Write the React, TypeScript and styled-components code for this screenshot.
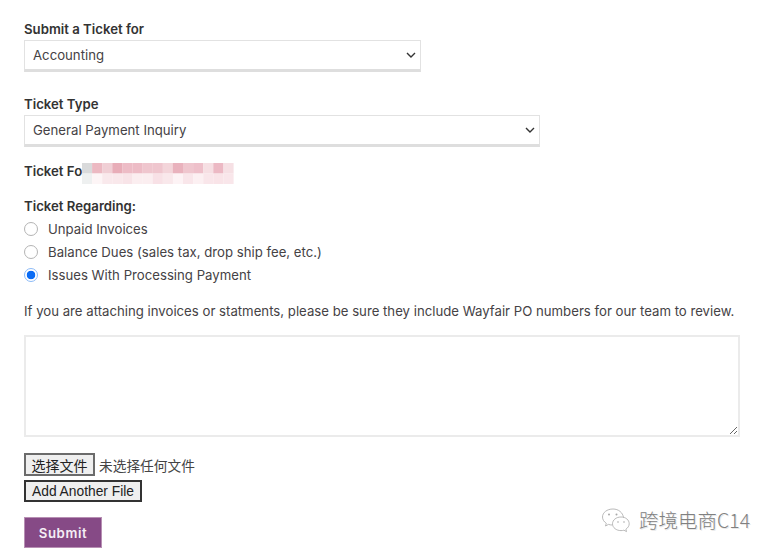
import React from "react";
import styled, {createGlobalStyle} from "styled-components";

const GlobalStyle = createGlobalStyle`
	html, body {
		margin: 0;
		padding: 0;
		background: #fff;
	}
`;

const chevron = encodeURIComponent(
	`<svg xmlns="http://www.w3.org/2000/svg" width="10" height="6" viewBox="0 0 10 6"><path d="M1 1l4 4 4-4" fill="none" stroke="#333" stroke-width="1.4"/></svg>`
);

const Page = styled.form`
	box-sizing: border-box;
	position: relative;
	width: 774px;
	height: 553px;
	padding: 21px 34px 0 24px;
	overflow: hidden;
	font-family: "Inter", "Noto Sans CJK SC", sans-serif;
	font-size: 13.2px;
	color: #454245;
`;

const FieldLabel = styled.label`
	display: block;
	height: 19px;
	line-height: 17px;
	font-weight: 600;
	font-size: 13.2px;
	color: #333;
`;

const Select = styled.select<{$width: number; $gap: number}>`
	display: block;
	box-sizing: border-box;
	appearance: none;
	width: ${p => p.$width}px;
	height: 32px;
	margin-bottom: ${p => p.$gap}px;
	padding: 0 8px 1px 8px;
	border: 1px solid #e2e2e2;
	border-bottom: 3px solid #dedede;
	border-radius: 0;
	background: #fff url("data:image/svg+xml,${chevron}") no-repeat right 4px center;
	font: inherit;
	color: #454245;
`;

const TicketFor = styled.div`
	display: flex;
	align-items: center;
	height: 20px;
	margin-bottom: 15px;
	font-weight: 600;
	font-size: 13.2px;
	color: #333;
`;

const Mosaic = styled.svg`
	display: block;
	margin: 4px 0 0 0;
`;

const RadioGroup = styled.fieldset`
	margin: 0 0 16px;
	padding: 0;
	border: 0;
`;

const GroupTitle = styled.div`
	height: 21px;
	line-height: 20px;
	font-weight: 600;
	font-size: 13.2px;
	color: #333;
`;

const RadioRow = styled.label`
	display: flex;
	align-items: center;
	gap: 10px;
	height: 23px;
`;

const Radio = styled.input`
	appearance: none;
	box-sizing: border-box;
	flex: none;
	width: 14px;
	height: 14px;
	margin: 0;
	border: 1px solid #b4b4b4;
	border-radius: 50%;
	background: #fff;

	&:checked {
		border-color: #8dbbf7;
		background: radial-gradient(circle, #0a6cf5 0 4px, #fff 4.6px);
	}
`;

const Notice = styled.p`
	margin: 0 0 14px;
	line-height: 19px;
	white-space: nowrap;
`;

const Message = styled.textarea`
	display: block;
	box-sizing: border-box;
	width: 716px;
	height: 102px;
	margin-bottom: 16px;
	border: 2px solid #ebebeb;
	border-radius: 0;
	outline: none;
	background: #fff;
`;

const FileRow = styled.div`
	display: flex;
	align-items: center;
	gap: 4px;
	height: 23px;
	margin-bottom: 4px;
	font-family: "Liberation Sans", "Noto Sans CJK SC", sans-serif;
	font-size: 13.7px;
	color: #444;
`;

const NativeButton = styled.button<{$dark?: boolean}>`
	display: block;
	box-sizing: border-box;
	height: ${p => (p.$dark ? 22 : 23)}px;
	padding: 0 ${p => (p.$dark ? 6 : 5.5)}px;
	border: 2px solid ${p => (p.$dark ? "#333" : "#6b6b6b")};
	border-radius: 0;
	background: #efefef;
	font-family: "Liberation Sans", "Noto Sans CJK SC", sans-serif;
	font-size: ${p => (p.$dark ? 13.8 : 14)}px;
	color: #222;
`;

const SubmitButton = styled.button`
	display: block;
	box-sizing: border-box;
	width: 78px;
	height: 31px;
	margin-top: 15px;
	padding: 0;
	border: 1px solid #b78fb3;
	background: #864a86;
	font-family: "Inter", sans-serif;
	font-size: 13.2px;
	font-weight: 600;
	letter-spacing: 0.6px;
	color: #f5eef5;
`;

const Watermark = styled.div`
	position: absolute;
	left: 601px;
	top: 505px;
	display: flex;
	align-items: center;
	gap: 8px;
	font-family: "Noto Sans CJK SC", sans-serif;
	font-size: 19.5px;
	font-weight: 300;
	color: #808080;
	text-shadow: 1px 1px 0 #e8e8e8;
`;

const mosaicRows = [
	["#d9dadb", "#ecb9c2", "#f0cfd5", "#e8adb8", "#edbcc6", "#edbcc6", "#efc6ce", "#efc6ce", "#f3d5da", "#e9b2bd", "#efc6ce", "#eec0ca", "#f6dfe3", "#ecb9c4", "#f6e0e4"],
	["#eef0f0", "#fdf5f6", "#f9e9ec", "#f9e8eb", "#f8e4e8", "#fbeef0", "#fbeef0", "#f8e1e6", "#f9e8eb", "#fdf3f5", "#f9e6ea", "#fcf0f2", "#f9e6ea", "#f9e4e8", "#f9e6ea"],
];

function RedactedName () {
	return (
		<Mosaic width="152" height="21" viewBox="0 0 152 21" aria-hidden="true">
			{mosaicRows.map((row, y) => row.map((fill, x) => (
				<rect key={`${x}-${y}`} x={x * 10.1} y={y * 10.5} width="10.2" height="10.6" fill={fill} />
			)))}
		</Mosaic>
	);
}

function WeChatIcon () {
	return (
		<svg width="30" height="26" viewBox="0 0 30 26" fill="none" stroke="#a8a8a8" strokeWidth="0.8" aria-hidden="true">
			<path d="M12 2C6 2 1.5 5.600 1.500 10c0 2.600 1.500 4.800 3.800 6.300L4.500 19l3-1.600c1.200.4 2.400.6 3.700.6" />
			<path d="M22.500 10.500C21.800 5.600 17.500 2 12 2" />
			<path d="M20 10c-4.800 0-8.500 3-8.500 6.800s3.700 6.800 8.500 6.800c1 0 2-.1 2.900-.4l2.600 1.400-.6-2.400c2-1.300 3.300-3.300 3.300-5.400C28.200 13 24.800 10 20 10z" />
			<circle cx="8" cy="7.500" r="1" fill="#a8a8a8" stroke="none" />
			<circle cx="15.500" cy="7.500" r="1" fill="#a8a8a8" stroke="none" />
			<circle cx="17" cy="15" r="0.800" fill="#a8a8a8" stroke="none" />
			<circle cx="23" cy="15" r="0.800" fill="#a8a8a8" stroke="none" />
		</svg>
	);
}

export default function App () {
	return (
		<Page onSubmit={e => e.preventDefault()}>
			<GlobalStyle />
			<FieldLabel>Submit a Ticket for</FieldLabel>
			<Select $width={397} $gap={24} defaultValue="Accounting">
				<option>Accounting</option>
			</Select>
			<FieldLabel>Ticket Type</FieldLabel>
			<Select $width={516} $gap={14} defaultValue="General Payment Inquiry">
				<option>General Payment Inquiry</option>
			</Select>
			<TicketFor>
				Ticket Fo
				<RedactedName />
			</TicketFor>
			<RadioGroup>
				<GroupTitle>Ticket Regarding:</GroupTitle>
				<RadioRow><Radio type="radio" name="regarding" />Unpaid Invoices</RadioRow>
				<RadioRow><Radio type="radio" name="regarding" />Balance Dues (sales tax, drop ship fee, etc.)</RadioRow>
				<RadioRow><Radio type="radio" name="regarding" defaultChecked />Issues With Processing Payment</RadioRow>
			</RadioGroup>
			<Notice>If you are attaching invoices or statments, please be sure they include Wayfair PO numbers for our team to review.</Notice>
			<Message />
			<FileRow>
				<NativeButton type="button">选择文件</NativeButton>
				未选择任何文件
			</FileRow>
			<NativeButton type="button" $dark>Add Another File</NativeButton>
			<SubmitButton type="submit">Submit</SubmitButton>
			<Watermark>
				<WeChatIcon />
				跨境电商C14
			</Watermark>
		</Page>
	);
}
